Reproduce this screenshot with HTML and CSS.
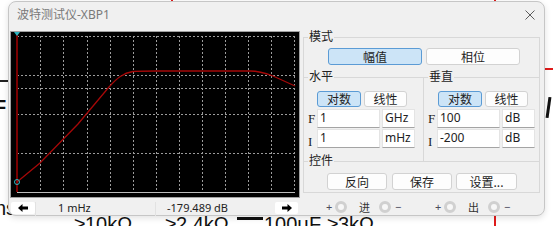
FILE: index.html
```html
<!DOCTYPE html>
<html lang="zh">
<head>
    <meta charset="UTF-8">
    <title>波特测试仪-XBP1</title>
    <link rel="stylesheet" href="styles.css">
</head>
<body>
    <!-- schematic behind the instrument window -->
    <div class="sheet">
        <div class="wire wire-top"></div>
        <div class="wire wire-right"></div>
        <div class="wire wire-side"></div>
        <div class="wire wire-dark"></div>
        <span class="mark mark-f">F</span>
        <span class="mark mark-ns">ns</span>
        <div class="mark-slash"></div>
        <span class="mark mark-low mark-r1">≥10kΩ</span>
        <span class="mark mark-low mark-r2">≥2.4kΩ</span>
        <div class="cap-bar"></div>
        <span class="mark mark-low mark-c1">100μF</span>
        <span class="mark mark-low mark-r3">≥3kΩ</span>
    </div>

    <div class="window">
        <div class="titlebar">
            <span class="title">波特测试仪-XBP1</span>
            <svg class="close" width="10" height="10" viewBox="0 0 10 10">
                <path d="M0.5 0.5L9.5 9.5M9.5 0.5L0.5 9.5" stroke="#5c5c5c" stroke-width="1" fill="none"/>
            </svg>
        </div>

        <div class="main">
            <div class="display">
                <div class="scope">
                    <svg width="288" height="165" viewBox="0 0 288 165">
                        <path d="M29.5 4V160M52.5 4V160M76.5 4V160M99.5 4V160M122.5 4V160M145.5 4V160M168.5 4V160M191.5 4V160M214.5 4V160M237.5 4V160M260.5 4V160M283.5 4V160"
                              stroke="#9c9c9c" stroke-width="1" stroke-dasharray="2 2" fill="none"/>
                        <path d="M6 4.5H284M6 43.5H284M6 56.5H284M6 82.5H284M6 121.5H284"
                              stroke="#9c9c9c" stroke-width="1" stroke-dasharray="2 2" fill="none"/>
                        <path d="M6 160.5H284" stroke="#bcbcbc" stroke-width="1"/>
                        <path d="M6 2V160" stroke="#7a0000" stroke-width="2"/>
                        <path d="M3 0H9L6 4Z" fill="#2bb5c0"/>
                        <path d="M6 150L29 131L67 92L98 55C106 46 112 41 122 39.5C128 39 135 39 145 39L239 39C248 39 254 41 262 44L284 54"
                              stroke="#a50808" stroke-width="1.3" fill="none"/>
                        <circle cx="6" cy="150" r="2.5" stroke="#2bb5c0" stroke-width="1" fill="none"/>
                    </svg>
                </div>
                <div class="readout">
                    <button class="nav">
                        <svg width="10" height="8" viewBox="0 0 10 8"><path d="M0 4L4.5 0V2.5H10V5.5H4.5V8Z" fill="#000"/></svg>
                    </button>
                    <div class="field field-x">1 mHz</div>
                    <div class="field field-y">-179.489 dB</div>
                    <button class="nav">
                        <svg width="10" height="8" viewBox="0 0 10 8"><path d="M10 4L5.5 0V2.5H0V5.5H5.5V8Z" fill="#000"/></svg>
                    </button>
                </div>
            </div>

            <div class="panel">
                <fieldset class="group mode">
                    <legend>模式</legend>
                    <div class="mode-buttons">
                        <button class="btn wide on">幅值</button>
                        <button class="btn wide">相位</button>
                    </div>
                </fieldset>

                <div class="axes">
                    <fieldset class="group axis axis-h">
                        <legend>水平</legend>
                        <div class="toggle">
                            <button class="btn on">对数</button>
                            <button class="btn">线性</button>
                        </div>
                        <div class="range first">
                            <span class="tag">F</span>
                            <span class="box num">1</span>
                            <span class="box unit">GHz</span>
                        </div>
                        <div class="range">
                            <span class="tag tag-i">I</span>
                            <span class="box num">1</span>
                            <span class="box unit">mHz</span>
                        </div>
                    </fieldset>
                    <fieldset class="group axis axis-v">
                        <legend>垂直</legend>
                        <div class="toggle">
                            <button class="btn on">对数</button>
                            <button class="btn">线性</button>
                        </div>
                        <div class="range first">
                            <span class="tag">F</span>
                            <span class="box num">100</span>
                            <span class="box unit">dB</span>
                        </div>
                        <div class="range">
                            <span class="tag tag-i">I</span>
                            <span class="box num">-200</span>
                            <span class="box unit">dB</span>
                        </div>
                    </fieldset>
                </div>

                <fieldset class="group controls">
                    <legend>控件</legend>
                    <div class="control-buttons">
                        <button class="btn act">反向</button>
                        <button class="btn act">保存</button>
                        <button class="btn act">设置...</button>
                    </div>
                </fieldset>

                <div class="ports">
                    <div class="port">
                        <span class="sign">+</span>
                        <span class="ring"></span>
                        <span class="port-name">进</span>
                        <span class="ring"></span>
                        <span class="sign">−</span>
                    </div>
                    <div class="port port-out">
                        <span class="sign">+</span>
                        <span class="ring"></span>
                        <span class="port-name">出</span>
                        <span class="ring"></span>
                        <span class="sign">−</span>
                    </div>
                </div>
            </div>
        </div>
    </div>
</body>
</html>
```

FILE: styles.css
```css
* {
    box-sizing: border-box;
}
body {
    margin: 0;
    width: 553px;
    height: 226px;
    overflow: hidden;
    position: relative;
    background: #fff;
    font-family: "Noto Sans", "Noto Sans CJK SC", sans-serif;
}

/* schematic pieces peeking out around the window */
.sheet {
    position: absolute;
    inset: 0;
}
.wire {
    position: absolute;
}
.wire-top {
    left: 171px;
    top: 0;
    width: 2px;
    height: 12px;
    background: #e01b1b;
}
.wire-right {
    left: 494px;
    top: 0;
    width: 2px;
    height: 226px;
    background: #e01b1b;
}
.wire-side {
    left: 536px;
    top: 68px;
    width: 20px;
    height: 2px;
    background: #e01b1b;
}
.wire-dark {
    left: 0;
    top: 80px;
    width: 12px;
    height: 2px;
    background: #222;
}
.mark {
    position: absolute;
    font-family: "Liberation Sans", sans-serif;
    font-size: 20px;
    line-height: 20px;
    color: #111;
    white-space: nowrap;
}
.mark-f {
    left: -6px;
    top: 97px;
    font-weight: bold;
}
.mark-ns {
    left: -5px;
    top: 198px;
}
.mark-slash {
    position: absolute;
    left: 547px;
    top: 97px;
    width: 3px;
    height: 21px;
    background: #111;
    transform: rotate(8deg);
}
.mark-low {
    top: 216px;
    line-height: 16px;
}
.mark-r1 {
    left: 74px;
}
.mark-r2 {
    left: 165px;
}
.cap-bar {
    position: absolute;
    left: 237px;
    top: 217px;
    width: 26px;
    height: 3px;
    background: #111;
}
.mark-c1 {
    left: 264px;
}
.mark-r3 {
    left: 327px;
}

/* instrument window */
.window {
    position: absolute;
    left: 8px;
    top: 1px;
    width: 537px;
    height: 215px;
    background: #f0f0f0;
    border: 1px solid #c6c6c6;
    border-radius: 8px;
    box-shadow: 0 2px 6px rgba(0, 0, 0, 0.12);
    display: flex;
    flex-direction: column;
}
.titlebar {
    height: 29px;
    flex: none;
    display: flex;
    justify-content: space-between;
    align-items: flex-start;
    padding: 5px 9px 0 8px;
}
.title {
    font-size: 12px;
    line-height: 16px;
    color: #7a7a7a;
}
.close {
    margin-top: 3px;
}
.main {
    flex: 1;
    display: flex;
    gap: 3px;
    padding-left: 1px;
}

/* plot and readout */
.display {
    width: 290px;
    display: flex;
    flex-direction: column;
}
.scope {
    height: 167px;
    background: #000;
    border: 1px solid #a0a0a0;
}
.scope svg {
    display: block;
}
.readout {
    flex: 1;
    display: flex;
    align-items: flex-start;
    padding: 4px 0 0 1px;
}
.nav {
    width: 24px;
    height: 12px;
    padding: 0;
    border: none;
    border-radius: 2px;
    background: #fff;
    display: flex;
    align-items: center;
    justify-content: center;
}
.nav:last-child {
    width: 23px;
    margin-left: 2px;
}
.field {
    height: 14px;
    font-size: 11px;
    line-height: 12px;
    color: #222;
    border-left: 1px solid #e2e2e2;
}
.field-x {
    width: 120px;
    padding-left: 22px;
}
.field-y {
    width: 118px;
    padding-left: 11px;
}

/* control panel */
.panel {
    width: 237px;
    margin-top: -1px;
    display: flex;
    flex-direction: column;
}
.group {
    margin: 0;
    padding: 0;
    min-width: 0;
    border: 1px solid #d8d8d8;
}
.group legend {
    margin-left: 4px;
    padding: 0 1px;
    font-size: 12px;
    line-height: 14px;
    color: #222;
}
.mode {
    border-bottom: none;
    padding: 4px 0 12px 0;
}
.mode-buttons,
.toggle,
.control-buttons {
    display: flex;
}
.mode-buttons {
    gap: 4px;
    padding-left: 24px;
}
.btn {
    height: 17px;
    padding: 0;
    border: 1px solid #d2d2d2;
    border-radius: 3px;
    background: #fdfdfd;
    font-family: "Noto Sans CJK SC", sans-serif;
    font-size: 12px;
    line-height: 14px;
    color: #1e1e1e;
}
.btn.on {
    background: #cce4f7;
    border-color: #5b9bd5;
}
.btn.wide {
    width: 94px;
}
.axes {
    display: flex;
    margin-top: -7px;
}
.axis {
    border-bottom: none;
    padding: 7px 0 13px 0;
}
.axis-h {
    width: 121px;
}
.axis-v {
    width: 116px;
    border-left: none;
}
.toggle {
    gap: 3px;
    padding-left: 13px;
}
.axis-v .toggle {
    padding-left: 14px;
}
.toggle .btn {
    width: 44px;
    height: 16px;
}
.toggle .btn + .btn {
    width: 43px;
}
.range {
    display: flex;
    height: 19px;
    margin-top: 1px;
}
.range.first {
    margin-top: 2px;
}
.tag {
    width: 13px;
    padding-left: 4px;
    font-family: "Liberation Serif", serif;
    font-size: 13px;
    line-height: 19px;
    color: #222;
}
.tag-i {
    padding-top: 3px;
}
.box {
    height: 19px;
    background: #fff;
    border: 1px solid #e4e4e4;
    border-bottom-color: #a4a4a4;
    font-size: 12px;
    line-height: 16px;
    color: #222;
    padding-left: 2px;
}
.box.num {
    width: 63px;
}
.box.unit {
    width: 33px;
    margin-left: 2px;
}
.controls {
    margin-top: -7px;
    padding: 5px 0 2px 0;
}
.control-buttons {
    padding-left: 23px;
}
.control-buttons .btn {
    width: 60px;
}
.control-buttons .btn + .btn {
    margin-left: 5px;
}
.control-buttons .btn:last-child {
    width: 61px;
    margin-left: 4px;
}

/* input / output terminals */
.ports {
    flex: 1;
    display: flex;
    align-items: center;
    padding: 4px 0 0 23px;
}
.port {
    display: flex;
    align-items: center;
}
.port-out {
    margin-left: 35px;
}
.sign {
    width: 5px;
    font-size: 11px;
    line-height: 12px;
    text-align: center;
    color: #4b4b5a;
}
.ring {
    width: 12px;
    height: 12px;
    margin: 0 4px;
    border-radius: 50%;
    border: 3px solid #d0d0d0;
    background: #f7f7f7;
}
.port-name {
    margin: 0 5px 0 8px;
    font-family: "Noto Sans CJK SC", sans-serif;
    font-size: 11px;
    line-height: 12px;
    color: #333;
}
```
